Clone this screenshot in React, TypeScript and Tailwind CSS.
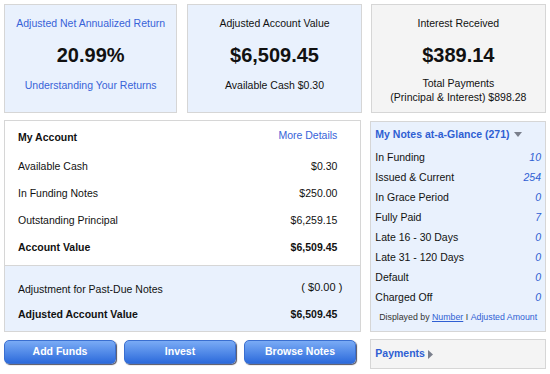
import React from "react";

const font = { fontFamily: '"Liberation Sans", Arial, sans-serif' };

function Btn({ label }: { label: string }) {
  return (
    <button className="w-[112px] h-[24px] rounded-[5px] bg-gradient-to-b from-[#7aabf5] to-[#2c6adb] text-white text-[10.5px] font-bold shadow-[1px_1px_1px_rgba(40,40,60,0.8)] border border-[#3a6fd0]">
      {label}
    </button>
  );
}

export default function App() {
  const rows: [string, string][] = [
    ["In Funding", "10"],
    ["Issued & Current", "254"],
    ["In Grace Period", "0"],
    ["Fully Paid", "7"],
    ["Late 16 - 30 Days", "0"],
    ["Late 31 - 120 Days", "0"],
    ["Default", "0"],
    ["Charged Off", "0"],
  ];
  return (
    <div style={font} className="w-[550px] h-[374px] bg-white p-[4px] text-[#111] overflow-hidden">
      {/* top cards */}
      <div className="flex h-[109px]">
        <div className="w-[174px] border border-[#d6d6d6] bg-[#e9f1fd] flex flex-col items-center pt-[11px]">
          <div className="text-[10.5px] text-[#3863d8] leading-[14px]">Adjusted Net Annualized Return</div>
          <div className="text-[20px] font-bold leading-[24px] mt-[13px]">20.99%</div>
          <div className="text-[10.5px] text-[#3863d8] leading-[14px] mt-[11px]">Understanding Your Returns</div>
        </div>
        <div className="w-[175px] ml-[10px] border border-[#d6d6d6] bg-[#e9f1fd] flex flex-col items-center pt-[11px]">
          <div className="text-[10.5px] leading-[14px]">Adjusted Account Value</div>
          <div className="text-[20px] font-bold leading-[24px] mt-[13px]">$6,509.45</div>
          <div className="text-[10.5px] leading-[14px] mt-[11px]">Available Cash $0.30</div>
        </div>
        <div className="w-[176px] ml-[9px] border border-[#d6d6d6] bg-[#f4f4f4] flex flex-col items-center pt-[11px]">
          <div className="text-[10.5px] leading-[14px]">Interest Received</div>
          <div className="text-[20px] font-bold leading-[24px] mt-[13px]">$389.14</div>
          <div className="text-[10.5px] leading-[14px] mt-[9px]">Total Payments</div>
          <div className="text-[10.5px] leading-[14px]">(Principal &amp; Interest) $898.28</div>
        </div>
      </div>

      {/* middle */}
      <div className="flex mt-[7px]">
        <div className="w-[358px] flex flex-col">
          <div className="h-[212px] border border-[#d6d6d6] flex flex-col">
            <div className="bg-white h-[144px] pl-[13px] pr-[23px] text-[10.5px]">
              <div className="flex justify-between items-center h-[32px] pt-[2px]">
                <span className="font-bold">My Account</span>
                <span className="text-[10.5px] text-[#3863d8] -mt-[4px]">More Details</span>
              </div>
              <div className="flex justify-between items-center h-[27px]">
                <span>Available Cash</span>
                <span>$0.30</span>
              </div>
              <div className="flex justify-between items-center h-[27px]">
                <span>In Funding Notes</span>
                <span>$250.00</span>
              </div>
              <div className="flex justify-between items-center h-[27px]">
                <span>Outstanding Principal</span>
                <span>$6,259.15</span>
              </div>
              <div className="flex justify-between items-center h-[27px] font-bold">
                <span>Account Value</span>
                <span>$6,509.45</span>
              </div>
            </div>
            <div className="flex-1 bg-[#e9f1fd] border-t border-[#d6d6d6] pl-[13px] pr-[23px] text-[10.5px] pt-[12px]">
              <div className="flex justify-between items-center h-[24px]">
                <span>Adjustment for Past-Due Notes</span>
                <span className="text-[11px] -mt-[6px] -mr-[5px]">( $0.00 )</span>
              </div>
              <div className="flex justify-between items-center h-[25px] font-bold">
                <span>Adjusted Account Value</span>
                <span>$6,509.45</span>
              </div>
            </div>
          </div>
          <div className="flex gap-[8px] mt-[8px]">
            <Btn label="Add Funds" />
            <Btn label="Invest" />
            <Btn label="Browse Notes" />
          </div>
        </div>

        <div className="w-[176px] ml-[9px] flex flex-col">
          <div className="h-[211px] mt-[1px] border border-[#d6d6d6] bg-[#e9f1fd] px-[4px] text-[10.5px]">
            <div className="flex items-center h-[26px] font-bold text-[#2f5fd3] text-[10.5px]">
              My Notes at-a-Glance (271)
              <svg width="9" height="6" viewBox="0 0 9 6" className="ml-[4px]">
                <path d="M0 0 L8 0 L4 5 Z" fill="#7a7f8c" />
              </svg>
            </div>
            {rows.map(([k, v]) => (
              <div key={k} className="flex justify-between items-center h-[20px]">
                <span>{k}</span>
                <span className="italic text-[#2f5fd3]">{v}</span>
              </div>
            ))}
            <div className="text-[8.8px] h-[20px] flex items-center justify-center text-[#333] whitespace-nowrap">
              Displayed by&nbsp;<span className="text-[#2f5fd3] underline">Number</span>&nbsp;I&nbsp;<span className="text-[#2f5fd3]">Adjusted Amount</span>
            </div>
          </div>
          <div className="h-[30px] mt-[7px] border border-[#d6d6d6] bg-[#f4f4f4] flex items-center px-[4px] text-[10.5px] font-bold text-[#2f5fd3]">
            Payments
            <svg width="6" height="9" viewBox="0 0 6 9" className="ml-[3px]">
              <path d="M0 0 L5 4.5 L0 9 Z" fill="#7a7f8c" />
            </svg>
          </div>
        </div>
      </div>
    </div>
  );
}
